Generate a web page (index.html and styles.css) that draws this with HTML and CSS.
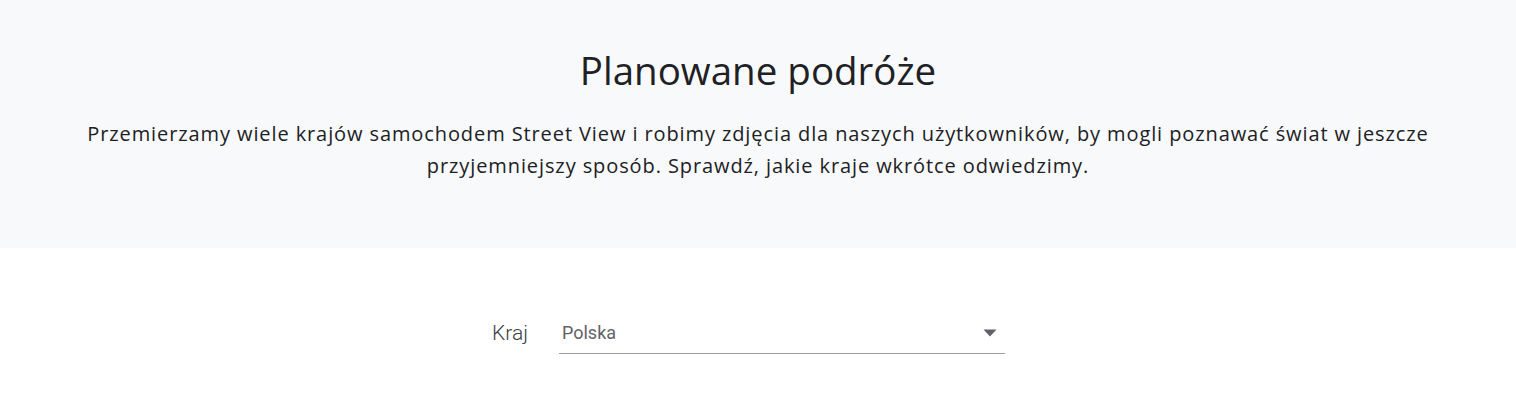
FILE: index.html
```html
<!DOCTYPE html>
<html lang="pl">
<head>
<meta charset="utf-8">
<title>Planowane podróże</title>
<link rel="stylesheet" href="styles.css">
</head>
<body>
<section class="hero">
  <h1 class="hero-title">Planowane podróże</h1>
  <p class="hero-text">Przemierzamy wiele krajów samochodem Street View i robimy zdjęcia dla naszych użytkowników, by mogli poznawać świat w jeszcze przyjemniejszy sposób. Sprawdź, jakie kraje wkrótce odwiedzimy.</p>
</section>
<section class="filter">
  <div class="filter-row">
    <label class="filter-label" for="country">Kraj</label>
    <div class="select">
      <span class="select-value">Polska</span>
      <svg class="select-arrow" width="14" height="8" viewBox="0 0 14 8" aria-hidden="true"><path d="M0.5 0.5 L13.5 0.5 L7 7.5 Z" fill="#5f6368"/></svg>
    </div>
  </div>
</section>
</body>
</html>
```

FILE: styles.css
```css
html, body {
  margin: 0;
  padding: 0;
  background: #ffffff;
}
body {
  font-family: "Open Sans", "Noto Sans", sans-serif;
  color: #202124;
}
.hero {
  background: #f8f9fa;
  height: 248px;
  box-sizing: border-box;
  padding: 46px 40px 0;
  text-align: center;
}
.hero-title {
  margin: 0;
  font-weight: 400;
  font-size: 38.5px;
  line-height: 48px;
  letter-spacing: 0;
  color: #202124;
}
.hero-text {
  margin: 24px auto 0;
  max-width: 1380px;
  font-size: 20px;
  letter-spacing: 0.9px;
  line-height: 32px;
  color: #202124;
}
.filter {
  padding-top: 64px;
  display: flex;
  justify-content: center;
}
.filter-row {
  display: flex;
  align-items: center;
  gap: 31px;
  padding-right: 19px;
}
.filter-label {
  font-family: Roboto, "Liberation Sans", sans-serif;
  font-weight: 300;
  font-size: 21px;
  color: #3c4043;
}
.select {
  width: 446px;
  height: 42px;
  box-sizing: border-box;
  border-bottom: 1px solid #9aa0a6;
  display: flex;
  align-items: center;
  justify-content: space-between;
  padding: 0 8px 0 3px;
}
.select-value {
  font-family: Roboto, "Liberation Sans", sans-serif;
  font-size: 18px;
  color: #5f6368;
}
.select-arrow {
  display: block;
}
```
